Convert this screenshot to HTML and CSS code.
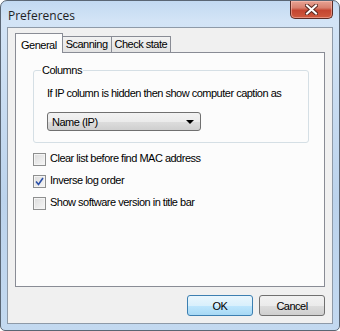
FILE: index.html
```html
<!DOCTYPE html>
<html lang="en">

<head>
  <meta charset="UTF-8">
  <title>Preferences</title>
  <link rel="stylesheet" href="styles.css">
</head>

<body>
  <div class="window">
    <div class="titlebar">
      <span class="title">Preferences</span>
      <button class="close" aria-label="Close">
        <svg width="13" height="11" viewBox="0 0 13 11">
          <path d="M2 1.5 L11 9.5 M11 1.5 L2 9.5" stroke="#5a2a22" stroke-width="4" stroke-linecap="square" />
          <path d="M2 1.5 L11 9.5 M11 1.5 L2 9.5" stroke="#fff" stroke-width="2" stroke-linecap="square" />
        </svg>
      </button>
    </div>
    <div class="client">
      <div class="tabs">
        <div class="tab active">General</div>
        <div class="tab">Scanning</div>
        <div class="tab">Check state</div>
      </div>
      <div class="panel">
        <fieldset class="group">
          <legend>Columns</legend>
          <p class="caption">If IP column is hidden then show computer caption as</p>
          <div class="combo">
            <span>Name (IP)</span>
            <span class="arrow"></span>
          </div>
        </fieldset>
        <ul class="options">
          <li><span class="check"></span>Clear list before find MAC address</li>
          <li><span class="check checked">
              <svg width="9" height="9" viewBox="0 0 9 9">
                <path d="M1 4.5 L3.5 7.5 L8 1" fill="none" stroke="#2a4fa8" stroke-width="1.6" />
              </svg>
            </span>Inverse log order</li>
          <li><span class="check"></span>Show software version in title bar</li>
        </ul>
      </div>
      <div class="buttons">
        <button class="btn default">OK</button>
        <button class="btn">Cancel</button>
      </div>
    </div>
  </div>
</body>

</html>
```

FILE: styles.css
```css
body {
  margin: 0;
  padding: 0;
  font-family: 'Liberation Sans', Arial, sans-serif;
  font-size: 11px;
  letter-spacing: -0.5px;
  color: #000;
  background: #fff;
}

.window {
  width: 340px;
  height: 331px;
  box-sizing: border-box;
  border: 1px solid #5a6674;
  border-radius: 7px 7px 5px 5px;
  background: linear-gradient(#c2d9f1 0, #d3e4f6 20px, #bcd3ec 60%, #c3d9f0 100%);
  padding: 0 6px 6px;
  display: flex;
  flex-direction: column;
}

.titlebar {
  height: 26px;
  display: flex;
  align-items: flex-start;
  justify-content: space-between;
}

.title {
  margin: 6px 0 0 1px;
  font-family: 'Open Sans', 'Liberation Sans', sans-serif;
  font-size: 12px;
  letter-spacing: 0;
  color: #1e1e1e;
}

.close {
  width: 43px;
  height: 18px;
  margin: 0;
  padding: 0;
  border: 1px solid #5c2b24;
  border-top: none;
  border-radius: 0 0 5px 5px;
  background: linear-gradient(#e8a394 0, #d8806e 40%, #c44530 55%, #cf5a3e 100%);
  box-shadow: inset 0 0 0 1px rgba(255, 200, 190, 0.5);
  display: flex;
  align-items: center;
  justify-content: center;
}

.client {
  flex: 1;
  border: 1px solid #8e9aa8;
  background: #f0f0f0;
  padding: 5px 7px 0;
  display: flex;
  flex-direction: column;
}

.tabs {
  display: flex;
  align-items: flex-end;
  height: 19px;
  position: relative;
  z-index: 1;
}

.tab {
  height: 15px;
  padding: 0 3px;
  border: 1px solid #898c95;
  border-bottom: none;
  border-left: none;
  background: linear-gradient(#f2f2f2, #e3e3e3);
  line-height: 15px;
}

.tab.active {
  height: 19px;
  padding: 0 5px;
  border-left: 1px solid #898c95;
  background: #fcfcfc;
  line-height: 22px;
  margin-bottom: -1px;
}

.panel {
  height: 233px;
  border: 1px solid #898c95;
  background: #fcfcfc;
  padding: 0 15px 0 17px;
}

.group {
  box-sizing: border-box;
  margin: 11px 0 0;
  padding: 0 0 0 13px;
  height: 79px;
  border: 1px solid #d5dfe5;
  border-radius: 3px;
}

.group legend {
  padding: 0 1px;
  margin-left: -6px;
}

.caption {
  margin: 11px 0 13px;
}

.combo {
  width: 142px;
  height: 17px;
  border: 1px solid #707070;
  border-radius: 3px;
  background: linear-gradient(#f2f2f2 0, #ebebeb 50%, #dddddd 51%, #cfcfcf 100%);
  display: flex;
  align-items: center;
  justify-content: space-between;
  padding: 0 6px 0 4px;
}

.arrow {
  width: 0;
  height: 0;
  border-left: 4px solid transparent;
  border-right: 4px solid transparent;
  border-top: 4px solid #000;
}

.options {
  list-style: none;
  margin: 9px 0 0;
  padding: 0;
}

.options li {
  height: 22px;
  display: flex;
  align-items: flex-start;
}

.check {
  width: 11px;
  height: 11px;
  border: 1px solid #8e8f8f;
  background: linear-gradient(135deg, #dcdcdc, #f6f6f6);
  box-shadow: inset 0 0 0 1px #f4f4f4;
  margin: 1px 4px 0 0;
  display: flex;
  align-items: center;
  justify-content: center;
}

.buttons {
  display: flex;
  justify-content: flex-end;
  gap: 6px;
  margin-top: 8px;
}

.btn {
  width: 66px;
  height: 21px;
  border: 1px solid #707070;
  border-radius: 3px;
  background: linear-gradient(#f2f2f2 0, #ebebeb 50%, #dddddd 51%, #cfcfcf 100%);
  font-family: 'Liberation Sans', Arial, sans-serif;
  font-size: 11px;
  letter-spacing: -0.5px;
  color: #000;
  padding: 0;
}

.btn.default {
  border-color: #3c7fb1;
  background: linear-gradient(#eaf6fd 0, #d9f0fc 50%, #bee6fd 51%, #a7d9f5 100%);
}
```
